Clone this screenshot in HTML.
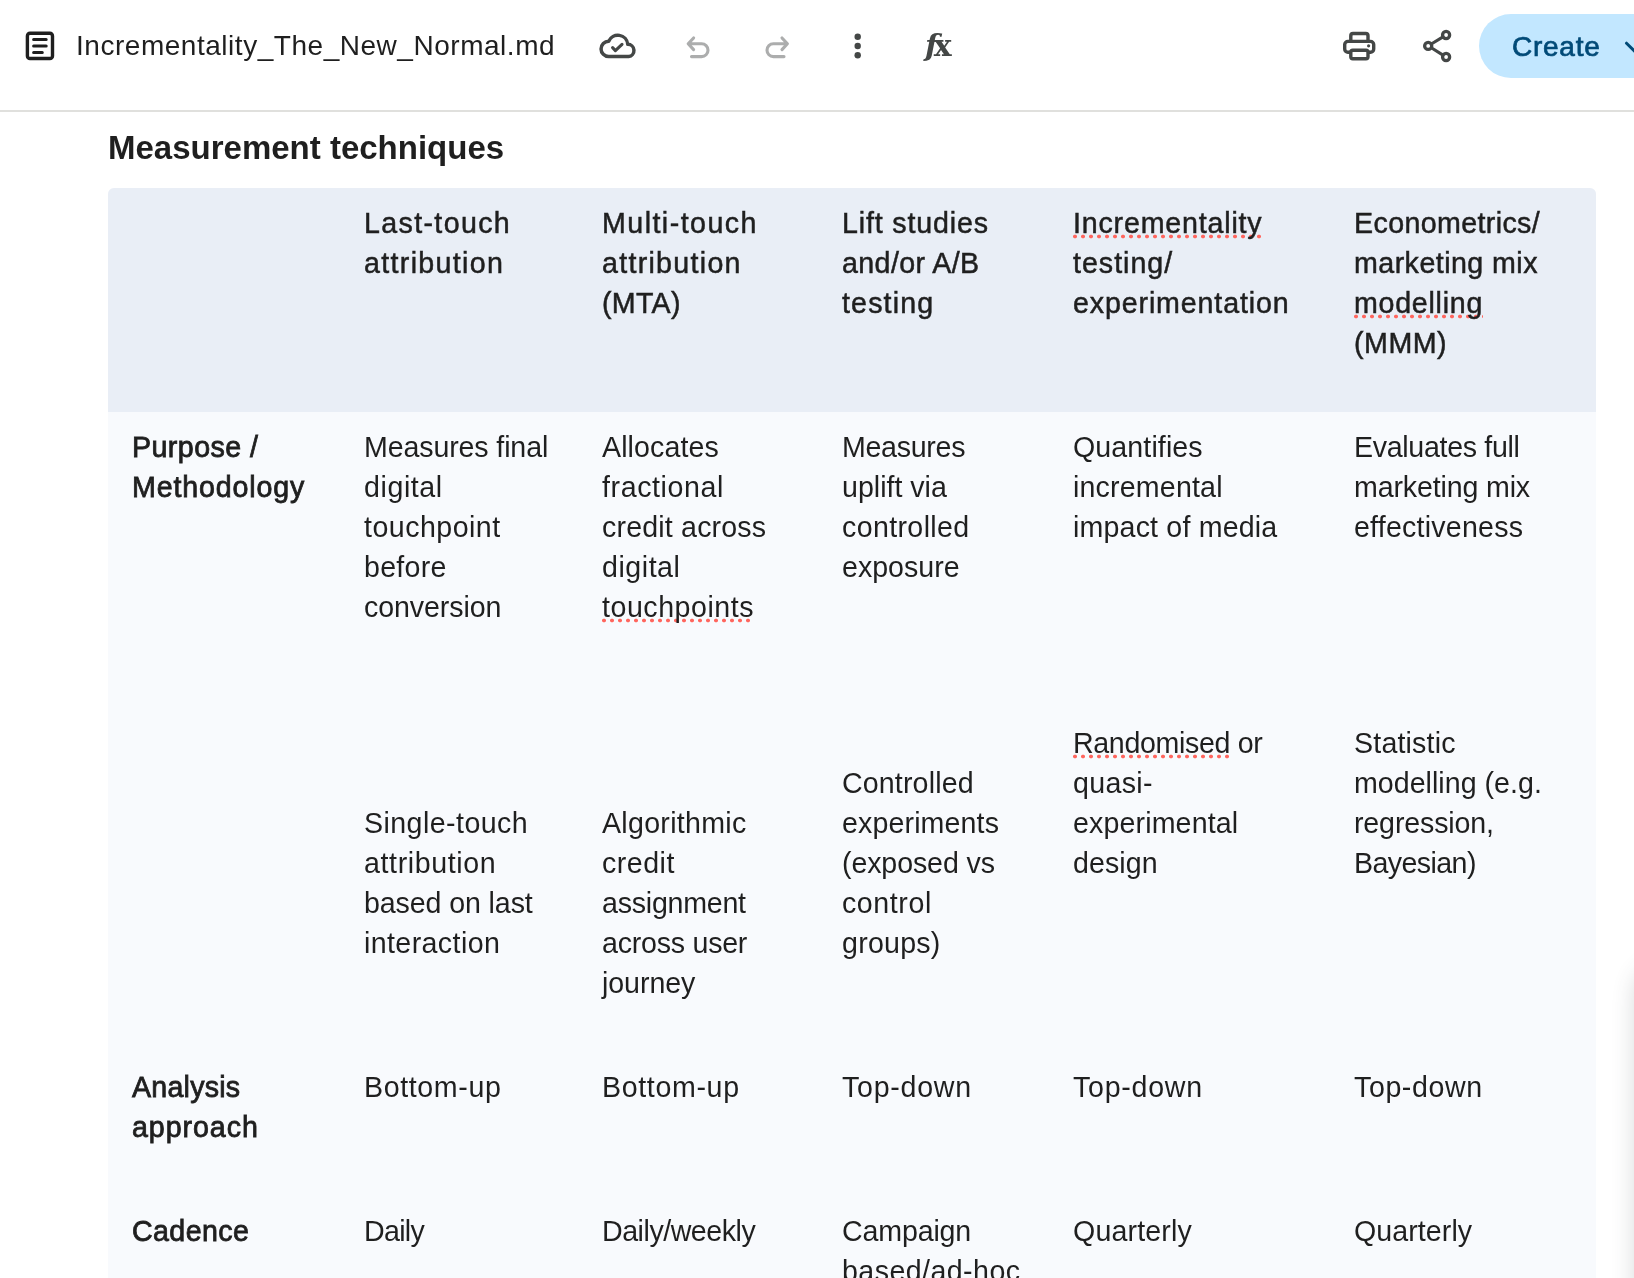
<!DOCTYPE html>
<html lang="en">
<head>
<meta charset="utf-8">
<title>Incrementality_The_New_Normal.md</title>
<style>
*{box-sizing:border-box;margin:0;padding:0}
html,body{width:1634px;height:1278px;overflow:hidden;background:#fff}
body{position:relative;font-family:"Liberation Sans",Arial,sans-serif;color:#1f1f1f}
.hdr{position:absolute;left:0;top:0;width:1634px;height:112px;border-bottom:2px solid #e0e0dd;background:#fff}
.ico{position:absolute;left:0;top:0;display:block;overflow:visible}
.title{will-change:transform;position:absolute;left:75.5px;top:25.5px;font-size:28px;line-height:40px;letter-spacing:.53px;white-space:nowrap;color:#1f1f1f}
.fx{will-change:transform;position:absolute;left:924.9px;top:25.5px;font-family:"DejaVu Serif","Liberation Serif",serif;font-weight:bold;font-size:30px;line-height:40px;color:#444746;white-space:nowrap}
.fx i{font-size:30px;letter-spacing:-4.2px}
.create{position:absolute;left:1479px;top:14px;width:200px;height:64px;border-radius:32px;background:#c2e7ff;color:#004a77}
.create span{will-change:transform;position:absolute;left:32.5px;top:12.5px;font-size:28px;line-height:40px;letter-spacing:.75px;-webkit-text-stroke:.7px #004a77}
h2{will-change:transform;position:absolute;left:108.2px;top:127.5px;font-size:33px;line-height:40px;font-weight:bold;letter-spacing:0px;white-space:nowrap;color:#1f1f1f}
.tbl{position:absolute;left:108px;top:188px;width:1488px;height:1200px;background:#f8fafd;border-radius:6px 6px 0 0;overflow:hidden}
.hb{position:absolute;left:0;top:0;width:1488px;height:224px;background:#e9eef6}
.tw{position:absolute;left:0;top:0;will-change:transform}
table{border-collapse:collapse;table-layout:fixed;width:1488px}
td,th{vertical-align:top;text-align:left;padding:16px 0 48px 24px;font-size:28.6px;line-height:40px;font-weight:normal;white-space:nowrap}
tr.h th{padding-top:15px;-webkit-text-stroke:.5px #1f1f1f}
td.b{-webkit-text-stroke:.8px #1f1f1f}
p{margin:0 0 176px}
p:last-child{margin-bottom:0}
u{text-decoration:none;padding-bottom:0;background-image:radial-gradient(circle at 2px 2.5px,#ff665e 1.6px,rgba(255,102,94,0) 2.2px);background-size:8px 5px;background-repeat:repeat-x;background-position:0 100%}
.shadow{position:absolute;left:1640px;top:968px;width:100px;height:600px;border-radius:24px;box-shadow:0 2px 22px 6px rgba(60,64,67,.19)}
</style>
</head>
<body>
<div class="hdr">
<svg class="ico" width="1634" height="112" viewBox="0 0 1634 112" fill="none" stroke-linecap="round" stroke-linejoin="round">
  <!-- document icon -->
  <g stroke="#1f1f1f">
    <rect x="27.4" y="33.3" width="25.1" height="25.2" rx="2.6" stroke-width="3.4"/>
    <path d="M33.6 39.5H46.2M33.6 46.05H46.2M33.6 52.6H42.3" stroke-width="3"/>
  </g>
  <!-- cloud done -->
  <g stroke="#444746">
    <path d="M608.7 56.55A7.65 7.65 0 0 1 608.7 41.25A9.95 9.95 0 0 1 627.75 44.36A6.12 6.12 0 0 1 628.6 56.55Z" stroke-width="3.5"/>
    <path d="M612.6 47.7L615.4 50.6L622 44.3" stroke-width="3.1"/>
  </g>
  <!-- undo / redo (disabled) -->
  <g stroke="#acadad" stroke-width="3.1">
    <path d="M693.6 38L688.2 43.8L693.6 49.6M688.6 43.8H701.6A6.4 6.4 0 0 1 701.6 56.6H691.5"/>
    <path d="M782 38L787.4 43.8L782 49.6M787 43.8H773.4A6.4 6.4 0 0 0 773.4 56.6H784"/>
  </g>
  <!-- more vert -->
  <g fill="#444746" stroke="none">
    <circle cx="857.7" cy="36.7" r="3.2"/><circle cx="857.7" cy="46" r="3.2"/><circle cx="857.7" cy="55.3" r="3.2"/>
  </g>
  <!-- print -->
  <g stroke="#444746" stroke-width="3.4">
    <path d="M1350.8 41.4V35.7A2.2 2.2 0 0 1 1353 33.5H1365.8A2.2 2.2 0 0 1 1368 35.7V41.4"/>
    <rect x="1344.7" y="41.4" width="29" height="10.9" rx="3.2"/>
    <rect x="1350.8" y="50.3" width="17.2" height="8.4" rx="2" fill="#fff"/>
    <circle cx="1368.6" cy="45.8" r="1.6" fill="#444746" stroke="none"/>
  </g>
  <!-- share -->
  <g stroke="#444746">
    <path d="M1443 36.9L1431.3 44M1431.3 47.8L1443 55.1" stroke-width="3.1"/>
    <circle cx="1446.1" cy="35" r="3.55" stroke-width="3.3"/>
    <circle cx="1428.2" cy="45.9" r="3.55" stroke-width="3.3"/>
    <circle cx="1446.1" cy="57" r="3.55" stroke-width="3.3"/>
  </g>
</svg>
<div class="title">Incrementality_The_New_Normal.md</div>
<div class="fx"><i>f</i>x</div>
<div class="create"><span>Create</span>
  <svg class="ico" style="left:140px;top:22px" width="24" height="20" viewBox="0 0 24 20" fill="none" stroke="#004a77" stroke-width="3" stroke-linecap="round" stroke-linejoin="round"><path d="M7.5 7.2L17.5 17.2L27.5 7.2"/></svg>
</div>
</div>
<h2>Measurement techniques</h2>
<div class="tbl">
<div class="hb"></div>
<div class="tw">
<table>
<colgroup><col style="width:232px"><col style="width:238px"><col style="width:240px"><col style="width:231px"><col style="width:281px"><col style="width:266px"></colgroup>
<tr class="h">
<th></th>
<th><p><span class="l" id="L0" style="letter-spacing:1.36px">Last-touch</span><br><span class="l" id="L1" style="letter-spacing:1.33px">attribution</span></p></th>
<th><p><span class="l" id="L2" style="letter-spacing:1.46px">Multi-touch</span><br><span class="l" id="L3" style="letter-spacing:1.29px">attribution</span><br><span class="l" id="L4" style="letter-spacing:0.30px">(MTA)</span></p></th>
<th><p><span class="l" id="L5" style="letter-spacing:0.85px">Lift studies</span><br><span class="l" id="L6" style="letter-spacing:0.40px">and/or A/B</span><br><span class="l" id="L7" style="letter-spacing:1.15px">testing</span></p></th>
<th><p><span class="l" id="L8" style="letter-spacing:0.82px"><u>Incrementality</u></span><br><span class="l" id="L9" style="letter-spacing:1.00px">testing/</span><br><span class="l" id="L10" style="letter-spacing:0.87px">experimentation</span></p></th>
<th><p><span class="l" id="L11" style="letter-spacing:0.38px">Econometrics/</span><br><span class="l" id="L12" style="letter-spacing:0.46px">marketing mix</span><br><span class="l" id="L13" style="letter-spacing:0.74px"><u>modelling</u></span><br><span class="l" id="L14" style="letter-spacing:0.52px">(MMM)</span></p></th>
</tr>
<tr>
<td class="b"><p><span class="l" id="L15" style="letter-spacing:0.44px">Purpose /</span><br><span class="l" id="L16" style="letter-spacing:0.85px">Methodology</span></p></td>
<td><p><span class="l" id="L17" style="letter-spacing:-0.13px">Measures final</span><br><span class="l" id="L18" style="letter-spacing:0.58px">digital</span><br><span class="l" id="L19" style="letter-spacing:0.47px">touchpoint</span><br><span class="l" id="L20" style="letter-spacing:0.28px">before</span><br><span class="l" id="L21" style="letter-spacing:-0.09px">conversion</span></p><p><span class="l" id="L22" style="letter-spacing:0.43px">Single-touch</span><br><span class="l" id="L23" style="letter-spacing:0.62px">attribution</span><br><span class="l" id="L24" style="letter-spacing:-0.11px">based on last</span><br><span class="l" id="L25" style="letter-spacing:0.39px">interaction</span></p></td>
<td><p><span class="l" id="L26" style="letter-spacing:0.09px">Allocates</span><br><span class="l" id="L27" style="letter-spacing:0.60px">fractional</span><br><span class="l" id="L28" style="letter-spacing:0.17px">credit across</span><br><span class="l" id="L29" style="letter-spacing:0.53px">digital</span><br><span class="l" id="L30" style="letter-spacing:0.52px"><u>touchpoints</u></span></p><p><span class="l" id="L31" style="letter-spacing:0.28px">Algorithmic</span><br><span class="l" id="L32" style="letter-spacing:0.50px">credit</span><br><span class="l" id="L33" style="letter-spacing:-0.24px">assignment</span><br><span class="l" id="L34" style="letter-spacing:-0.24px">across user</span><br><span class="l" id="L35" style="letter-spacing:-0.07px">journey</span></p></td>
<td><p><span class="l" id="L36" style="letter-spacing:-0.30px">Measures</span><br><span class="l" id="L37" style="letter-spacing:-0.01px">uplift via</span><br><span class="l" id="L38" style="letter-spacing:0.36px">controlled</span><br><span class="l" id="L39" style="letter-spacing:-0.01px">exposure</span></p><p><span class="l" id="L40" style="letter-spacing:0.14px">Controlled</span><br><span class="l" id="L41" style="letter-spacing:0.12px">experiments</span><br><span class="l" id="L42" style="letter-spacing:-0.12px">(exposed vs</span><br><span class="l" id="L43" style="letter-spacing:0.57px">control</span><br><span class="l" id="L44" style="letter-spacing:0.23px">groups)</span></p></td>
<td><p><span class="l" id="L45" style="letter-spacing:0.10px">Quantifies</span><br><span class="l" id="L46" style="letter-spacing:0.17px">incremental</span><br><span class="l" id="L47" style="letter-spacing:0.17px">impact of media</span></p><p><span class="l" id="L48" style="letter-spacing:-0.34px"><u>Randomised</u> or</span><br><span class="l" id="L49" style="letter-spacing:0.32px">quasi-</span><br><span class="l" id="L50" style="letter-spacing:0.13px">experimental</span><br><span class="l" id="L51" style="letter-spacing:0.06px">design</span></p></td>
<td><p><span class="l" id="L52" style="letter-spacing:-0.32px">Evaluates full</span><br><span class="l" id="L53" style="letter-spacing:-0.15px">marketing mix</span><br><span class="l" id="L54" style="letter-spacing:0.22px">effectiveness</span></p><p><span class="l" id="L55" style="letter-spacing:0.18px">Statistic</span><br><span class="l" id="L56" style="letter-spacing:0.02px">modelling (e.g.</span><br><span class="l" id="L57" style="letter-spacing:-0.15px">regression,</span><br><span class="l" id="L58" style="letter-spacing:-0.59px">Bayesian)</span></p></td>
</tr>
<tr>
<td class="b"><p><span class="l" id="L59" style="letter-spacing:0.24px">Analysis</span><br><span class="l" id="L60" style="letter-spacing:0.94px">approach</span></p></td>
<td><p><span class="l" id="L61" style="letter-spacing:0.62px">Bottom-up</span></p></td>
<td><p><span class="l" id="L62" style="letter-spacing:0.64px">Bottom-up</span></p></td>
<td><p><span class="l" id="L63" style="letter-spacing:0.73px">Top-down</span></p></td>
<td><p><span class="l" id="L64" style="letter-spacing:0.73px">Top-down</span></p></td>
<td><p><span class="l" id="L65" style="letter-spacing:0.59px">Top-down</span></p></td>
</tr>
<tr>
<td class="b"><p><span class="l" id="L66" style="letter-spacing:0.40px">Cadence</span></p></td>
<td><p><span class="l" id="L67" style="letter-spacing:-0.70px">Daily</span></p></td>
<td><p><span class="l" id="L68" style="letter-spacing:-0.47px">Daily/weekly</span></p></td>
<td><p><span class="l" id="L69" style="letter-spacing:-0.16px">Campaign</span><br><span class="l" id="L70" style="letter-spacing:0.43px">based/ad-hoc</span></p></td>
<td><p><span class="l" id="L71" style="letter-spacing:0.16px">Quarterly</span></p></td>
<td><p><span class="l" id="L72" style="letter-spacing:0.07px">Quarterly</span></p></td>
</tr>
</table>
</div>
</div>
<div class="shadow"></div>
</body>
</html>
